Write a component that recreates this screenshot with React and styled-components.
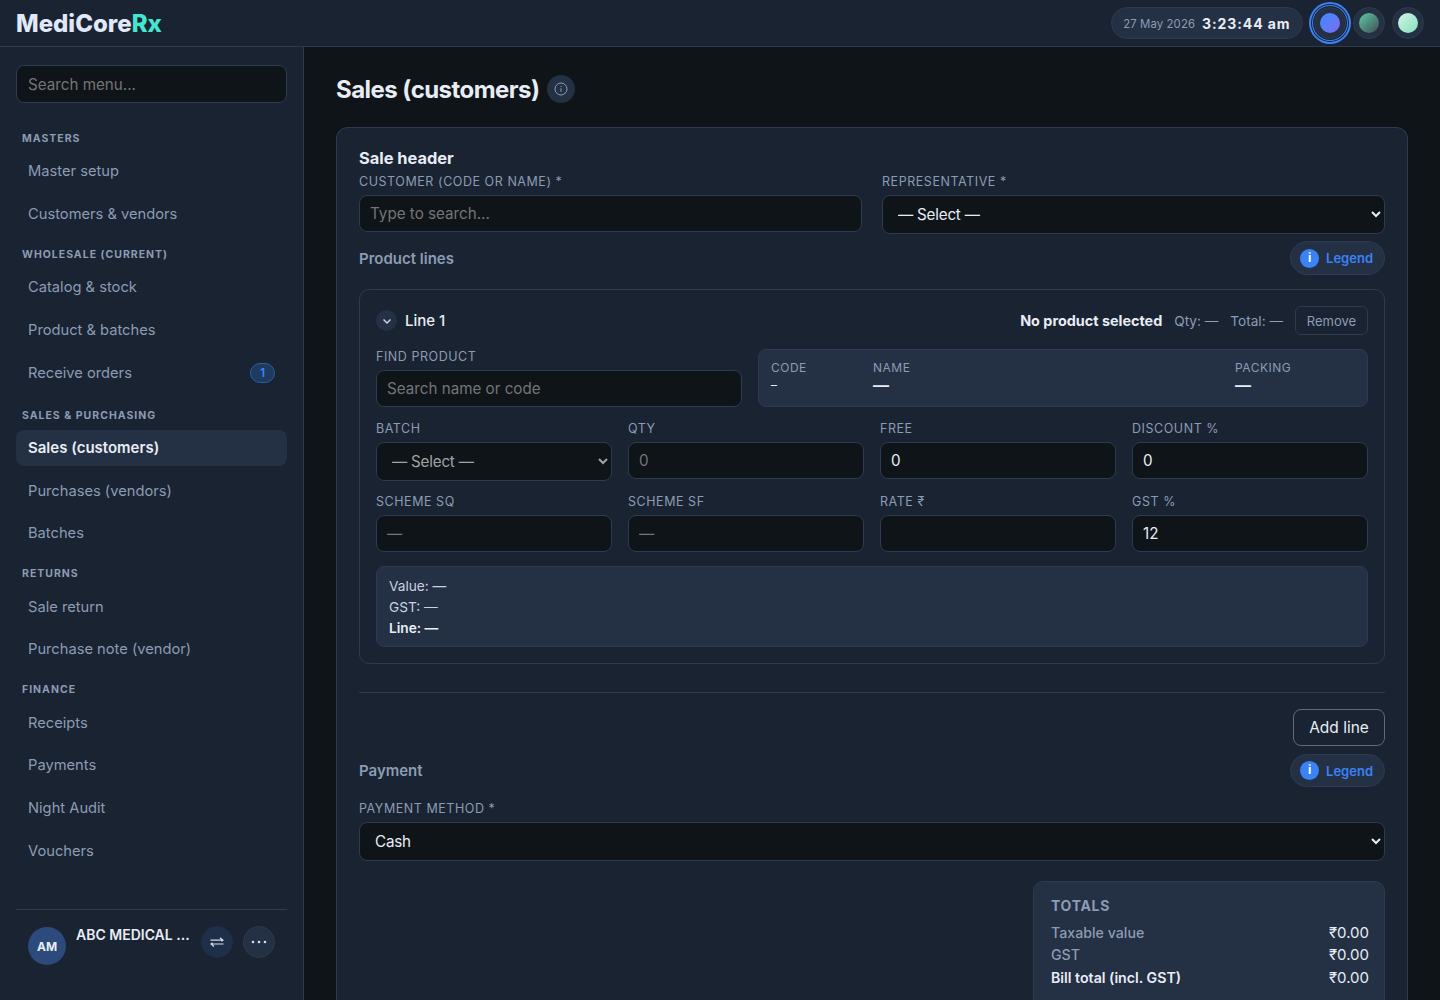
import React from 'react';
import styled, { createGlobalStyle } from 'styled-components';

const GlobalStyle = createGlobalStyle`
  * { box-sizing: border-box; }
  html, body { margin: 0; height: 100%; }
  body {
    background: #0f1419;
    color: #e8edf5;
    font-family: Inter, "Noto Sans", sans-serif;
    overflow: hidden;
  }
  input, select, button { font-family: inherit; }
`;

const Page = styled.div`
  display: flex;
  flex-direction: column;
  height: 1000px;
  overflow: hidden;
`;

const Header = styled.header`
  flex: none;
  display: flex;
  align-items: center;
  justify-content: space-between;
  height: 47px;
  padding: 0 16px;
  background: #1a2332;
  border-bottom: 1px solid #2d3a4f;
`;

const Logo = styled.div`
  font-size: 24px;
  font-weight: 800;
  color: #e0e8fa;
  span { color: #45e6d0; }
`;

const HeaderRight = styled.div`
  display: flex;
  align-items: center;
  margin-right: -3.5px;
`;

const Clock = styled.div`
  display: flex;
  align-items: center;
  gap: 7px;
  height: 32px;
  padding: 0 11px;
  margin-right: 8px;
  border-radius: 16px;
  background: #243044;
  border: 1px solid #2d3a4f;
`;

const ClockDate = styled.span`
  margin-top: 2px;
  font-size: 11.4px;
  color: #8b9cb3;
  letter-spacing: 0.1px;
`;

const ClockTime = styled.span`
  font-size: 14px;
  font-weight: 700;
  color: #e8edf5;
  letter-spacing: 0.9px;
`;

const ThemeDot = styled.button`
  display: flex;
  align-items: center;
  justify-content: center;
  width: 32px;
  height: 32px;
  padding: 0;
  margin: 0 3.5px;
  border-radius: 50%;
  background: #243044;
  border: 1px solid #2d3a4f;
  box-shadow: ${p => (p.$active ? '0 0 0 1px #1a2332, 0 0 0 2px #3b82f6, 0 0 0 3px #1a2332, 0 0 0 5px #3b82f6' : 'none')};
  i {
    display: block;
    width: 20px;
    height: 20px;
    border-radius: 50%;
    background: ${p => p.$fill};
  }
`;

const Body = styled.div`
  flex: 1;
  display: flex;
  min-height: 0;
`;

const Sidebar = styled.aside`
  flex: none;
  display: flex;
  flex-direction: column;
  width: 304px;
  padding: 18px 16px 0;
  background: #1a2332;
  border-right: 1px solid #2d3a4f;
`;

const Input = styled.input`
  display: block;
  width: 100%;
  height: ${p => p.$h || 37}px;
  padding: 0 ${p => p.$pad || 10}px;
  font-size: 15.2px;
  color: #e8edf5;
  background: #0f1419;
  border: 1px solid #2d3a4f;
  border-radius: 8px;
  outline: none;
  &::placeholder { color: #757575; opacity: 1; }
`;

const Select = styled.select`
  display: block;
  width: 100%;
  height: 39px;
  padding: 0 11px;
  font-size: 15.2px;
  letter-spacing: -0.2px;
  color: ${p => (p.$muted ? '#a3a3a3' : '#e8edf5')};
  background: #0f1419;
  border: 1px solid #2d3a4f;
  border-radius: 8px;
  outline: none;
`;

const SearchBox = styled.div`
  margin-bottom: 19px;
`;

const Nav = styled.nav`
  flex: 1;
`;

const NavLabel = styled.div`
  display: flex;
  align-items: center;
  height: 30.7px;
  padding: 2px 0 0 6px;
  font-size: 10.5px;
  font-weight: 700;
  letter-spacing: 1px;
  color: #8b9cb3;
  text-transform: uppercase;
`;

const NavItem = styled.div`
  display: flex;
  align-items: center;
  justify-content: space-between;
  height: ${p => (p.$tall ? 38.7 : 36.7)}px;
  margin-bottom: 6px;
  padding: 0 12px;
  border-radius: 8px;
  font-size: ${p => (p.$active ? 15 : 14.7)}px;
  font-weight: ${p => (p.$active ? 600 : 400)};
  color: ${p => (p.$active ? '#e8edf5' : '#8b9cb3')};
  background: ${p => (p.$active ? '#243044' : 'transparent')};
`;

const NavBadge = styled.span`
  width: 25px;
  height: 20px;
  border-radius: 10px;
  text-align: center;
  font-size: 12px;
  font-weight: 600;
  line-height: 18px;
  color: #3b82f6;
  background: #1e3a5f;
  border: 1px solid #2a5ca8;
`;

const SideFooter = styled.div`
  display: flex;
  align-items: flex-start;
  height: 91px;
  padding: 16px 12px 0;
  border-top: 1px solid #2d3a4f;
`;

const Avatar = styled.div`
  flex: none;
  display: flex;
  align-items: center;
  justify-content: center;
  width: 38px;
  height: 38px;
  margin-top: 1px;
  border-radius: 50%;
  background: #2c4a7c;
  color: #e8edf5;
  font-size: 12px;
  font-weight: 700;
`;

const CompanyName = styled.div`
  flex: 1;
  min-width: 0;
  margin: 0 10px;
  font-size: 14px;
  font-weight: 600;
  line-height: 17px;
  color: #e8edf5;
  white-space: nowrap;
`;

const RoundButton = styled.button`
  flex: none;
  display: flex;
  align-items: center;
  justify-content: center;
  width: 32px;
  height: 32px;
  padding: 0;
  margin-left: ${p => p.$gap || 0}px;
  border-radius: 50%;
  background: ${p => p.$bg || '#243044'};
  border: 1px solid ${p => p.$line || '#2d3a4f'};
  color: #d4dce8;
`;

const Main = styled.main`
  flex: 1;
  min-width: 0;
  padding: 28px 32px 0;
  overflow: hidden;
`;

const TitleRow = styled.div`
  display: flex;
  align-items: center;
  gap: 8px;
  height: 28px;
  margin-bottom: 24px;
`;

const Title = styled.h1`
  margin: 0;
  font-size: 24px;
  font-weight: 700;
  letter-spacing: -0.55px;
  color: #e8edf5;
`;

const InfoButton = styled.button`
  display: flex;
  align-items: center;
  justify-content: center;
  width: 28px;
  height: 28px;
  padding: 0;
  border: 0;
  border-radius: 50%;
  background: #243044;
  color: #8b9cb3;
`;

const Card = styled.section`
  padding: 21px 22px 0;
  background: #1a2332;
  border: 1px solid #2d3a4f;
  border-bottom: 0;
  border-radius: 12px 12px 0 0;
`;

const CardTitle = styled.h2`
  margin: 0;
  font-size: 16.4px;
  line-height: 18px;
  font-weight: 700;
  color: #e8edf5;
`;

const FieldLabel = styled.label`
  display: block;
  font-size: 12.5px;
  line-height: 14px;
  margin-bottom: 6px;
  letter-spacing: 0.55px;
  color: #8b9cb3;
  text-transform: uppercase;
`;

const HeaderGrid = styled.div`
  display: grid;
  grid-template-columns: 1fr 1fr;
  gap: 20px;
  margin-top: 8px;
  height: 60px;
`;

const SectionRow = styled.div`
  display: flex;
  align-items: center;
  justify-content: space-between;
  height: ${p => p.$h || 34}px;
  margin-top: ${p => p.$top || 0}px;
`;

const SectionTitle = styled.div`
  font-size: 15px;
  font-weight: 600;
  color: #8b9cb3;
`;

const Legend = styled.button`
  display: flex;
  align-items: center;
  gap: 7px;
  height: 100%;
  padding: 0 11px 0 9px;
  border-radius: 17px;
  background: #243044;
  border: 1px solid #2d3a4f;
  color: #3b82f6;
  font-size: 13px;
  font-weight: 600;
`;

const LegendIcon = styled.span`
  width: 19px;
  height: 19px;
  border-radius: 50%;
  background: #3b82f6;
  color: #fff;
  font-size: 12px;
  font-weight: 700;
  line-height: 18px;
  text-align: center;
`;

const LineCard = styled.div`
  margin-top: 14px;
  padding: 16px;
  height: 375px;
  border: 1px solid #2d3a4f;
  border-radius: 10px;
`;

const LineHeader = styled.div`
  display: flex;
  align-items: center;
  height: 29px;
  margin-bottom: 14px;
`;

const Chevron = styled.span`
  display: flex;
  align-items: center;
  justify-content: center;
  width: 21px;
  height: 21px;
  margin-right: 8px;
  border-radius: 50%;
  background: #243044;
  color: #c8d2e0;
`;

const LineName = styled.span`
  flex: 1;
  font-size: 15px;
  font-weight: 500;
`;

const LineProduct = styled.span`
  font-size: 14.4px;
  font-weight: 700;
  margin-right: 12px;
`;

const LineStat = styled.span`
  font-size: 13.6px;
  color: #8b9cb3;
  margin-right: 12px;
`;

const RemoveButton = styled.button`
  width: 73px;
  height: 29px;
  padding: 0;
  font-size: 13px;
  color: #8b9cb3;
  background: transparent;
  border: 1px solid #2d3a4f;
  border-radius: 6px;
`;

const FindGrid = styled.div`
  display: grid;
  grid-template-columns: 3fr 5fr;
  gap: 16px;
  align-items: end;
  margin-bottom: 15px;
`;

const ProductInfo = styled.div`
  display: grid;
  grid-template-columns: 90px 1fr 120px;
  column-gap: 12px;
  height: 58px;
  padding: 11px 12px 0;
  background: #243044;
  border: 1px solid #2d3a4f;
  border-radius: 8px;
`;

const InfoLabel = styled.div`
  font-size: 12px;
  line-height: 14px;
  letter-spacing: 0.5px;
  color: #8b9cb3;
  text-transform: uppercase;
`;

const InfoValue = styled.div`
  font-size: ${p => (p.$small ? 12 : 16)}px;
  font-weight: ${p => (p.$small ? 400 : 600)};
  line-height: 20px;
  color: #e8edf5;
`;

const FourGrid = styled.div`
  display: grid;
  grid-template-columns: repeat(4, 1fr);
  column-gap: 16px;
  height: ${p => p.$h}px;
`;

const SummaryBox = styled.div`
  padding: 9px 12px;
  height: 81px;
  background: #243044;
  border: 1px solid #2d3a4f;
  border-radius: 8px;
  font-size: 13.7px;
  line-height: 21px;
  color: #c8d2e0;
  b { font-weight: 600; color: #e8edf5; }
`;

const Divider = styled.hr`
  margin: 28px 0 16px;
  border: 0;
  border-top: 1px solid #2d3a4f;
`;

const ActionsRow = styled.div`
  display: flex;
  justify-content: flex-end;
  margin-bottom: 8px;
`;

const AddButton = styled.button`
  width: 92px;
  height: 37px;
  padding: 0;
  font-size: 15.5px;
  color: #e8edf5;
  background: transparent;
  border: 1px solid #5a6a80;
  border-radius: 8px;
`;

const PaymentField = styled.div`
  margin-top: 15px;
`;

const TotalsRow = styled.div`
  display: flex;
  justify-content: flex-end;
  margin-top: 20px;
`;

const Totals = styled.div`
  width: 352px;
  height: 130px;
  padding: 15px 15px 0 17px;
  background: #243044;
  border: 1px solid #2d3a4f;
  border-radius: 10px;
`;

const TotalsTitle = styled.div`
  font-size: 14px;
  font-weight: 700;
  letter-spacing: 0.7px;
  line-height: 17px;
  margin-bottom: 7.5px;
  color: #8b9cb3;
`;

const TotalLine = styled.div`
  display: flex;
  justify-content: space-between;
  font-size: 14.2px;
  line-height: 22.5px;
  font-weight: ${p => (p.$strong ? 600 : 500)};
  color: ${p => (p.$strong ? '#e8edf5' : '#8b9cb3')};
  span:last-child { color: #e8edf5; font-weight: 400; font-size: 15px; }
`;

const navGroups = [
  { label: 'Masters', items: ['Master setup', 'Customers & vendors'] },
  { label: 'Wholesale (current)', items: ['Catalog & stock', 'Product & batches', 'Receive orders'] },
  { label: 'Sales & purchasing', items: ['Sales (customers)', 'Purchases (vendors)', 'Batches'] },
  { label: 'Returns', items: ['Sale return', 'Purchase note (vendor)'] },
  { label: 'Finance', items: ['Receipts', 'Payments', 'Night Audit', 'Vouchers'] },
];

const LegendButton = () => (
  <Legend>
    <LegendIcon>i</LegendIcon>
    Legend
  </Legend>
);

const Field = ({ label, children }) => (
  <div>
    <FieldLabel>{label}</FieldLabel>
    {children}
  </div>
);

export default function App() {
  return (
    <Page>
      <GlobalStyle />
      <Header>
        <Logo>MediCore<span>Rx</span></Logo>
        <HeaderRight>
          <Clock>
            <ClockDate>27 May 2026</ClockDate>
            <ClockTime>3:23:44 am</ClockTime>
          </Clock>
          <ThemeDot $active $fill="linear-gradient(135deg, #3f8cff, #7c6cf0)"><i /></ThemeDot>
          <ThemeDot $fill="linear-gradient(135deg, #5fc9a4, #3f4f55)"><i /></ThemeDot>
          <ThemeDot $fill="linear-gradient(135deg, #d2f5e6, #84e0bd)"><i /></ThemeDot>
        </HeaderRight>
      </Header>
      <Body>
        <Sidebar>
          <SearchBox>
            <Input $h={38} $pad={11} placeholder="Search menu..." />
          </SearchBox>
          <Nav>
            {navGroups.map(group => (
              <div key={group.label}>
                <NavLabel>{group.label}</NavLabel>
                {group.items.map(item => (
                  <NavItem key={item} $active={item === 'Sales (customers)'} $tall={item === 'Receive orders'}>
                    {item}
                    {item === 'Receive orders' && <NavBadge>1</NavBadge>}
                  </NavItem>
                ))}
              </div>
            ))}
          </Nav>
          <SideFooter>
            <Avatar>AM</Avatar>
            <CompanyName>ABC MEDICAL ...</CompanyName>
            <RoundButton $bg="#1e2f4a" $line="#1e2f4a">
              <svg width="14" height="10" viewBox="0 0 14 10" fill="none" stroke="currentColor" strokeWidth="1.2">
                <path d="M0.5 3.2H13M10 0.7l3 2.5-1.5 1.2" />
                <path d="M13.5 7H1M4 9.5L1 7l1.5-1.2" />
              </svg>
            </RoundButton>
            <RoundButton $gap={10}>
              <svg width="16" height="4" viewBox="0 0 16 4" fill="currentColor">
                <circle cx="2" cy="2" r="1.3" />
                <circle cx="8" cy="2" r="1.3" />
                <circle cx="14" cy="2" r="1.3" />
              </svg>
            </RoundButton>
          </SideFooter>
        </Sidebar>
        <Main>
          <TitleRow>
            <Title>Sales (customers)</Title>
            <InfoButton>
              <svg width="14" height="14" viewBox="0 0 14 14" fill="none" stroke="currentColor" strokeWidth="1">
                <circle cx="7" cy="7" r="6" />
                <path d="M7 6.2v3.6M7 4v1" />
              </svg>
            </InfoButton>
          </TitleRow>
          <Card>
            <CardTitle>Sale header</CardTitle>
            <HeaderGrid>
              <Field label="Customer (code or name) *">
                <Input placeholder="Type to search..." />
              </Field>
              <Field label="Representative *">
                <Select><option>— Select —</option></Select>
              </Field>
            </HeaderGrid>
            <SectionRow $top={6}>
              <SectionTitle>Product lines</SectionTitle>
              <LegendButton />
            </SectionRow>
            <LineCard>
              <LineHeader>
                <Chevron>
                  <svg width="12" height="12" viewBox="0 0 12 12" fill="none" stroke="currentColor" strokeWidth="1.5">
                    <path d="M2.5 4.5L6 8l3.5-3.5" />
                  </svg>
                </Chevron>
                <LineName>Line 1</LineName>
                <LineProduct>No product selected</LineProduct>
                <LineStat>Qty: —</LineStat>
                <LineStat>Total: —</LineStat>
                <RemoveButton>Remove</RemoveButton>
              </LineHeader>
              <FindGrid>
                <Field label="Find product">
                  <Input placeholder="Search name or code" />
                </Field>
                <ProductInfo>
                  <div>
                    <InfoLabel>Code</InfoLabel>
                    <InfoValue $small>–</InfoValue>
                  </div>
                  <div>
                    <InfoLabel>Name</InfoLabel>
                    <InfoValue>—</InfoValue>
                  </div>
                  <div>
                    <InfoLabel>Packing</InfoLabel>
                    <InfoValue>—</InfoValue>
                  </div>
                </ProductInfo>
              </FindGrid>
              <FourGrid $h={73}>
                <Field label="Batch">
                  <Select $muted><option>— Select —</option></Select>
                </Field>
                <Field label="Qty">
                  <Input placeholder="0" />
                </Field>
                <Field label="Free">
                  <Input defaultValue="0" />
                </Field>
                <Field label="Discount %">
                  <Input defaultValue="0" />
                </Field>
              </FourGrid>
              <FourGrid $h={71}>
                <Field label="Scheme SQ">
                  <Input placeholder="—" />
                </Field>
                <Field label="Scheme SF">
                  <Input placeholder="—" />
                </Field>
                <Field label="Rate ₹">
                  <Input />
                </Field>
                <Field label="GST %">
                  <Input defaultValue="12" />
                </Field>
              </FourGrid>
              <SummaryBox>
                <div>Value: —</div>
                <div>GST: —</div>
                <div><b>Line: —</b></div>
              </SummaryBox>
            </LineCard>
            <Divider />
            <ActionsRow>
              <AddButton>Add line</AddButton>
            </ActionsRow>
            <SectionRow $h={33}>
              <SectionTitle>Payment</SectionTitle>
              <LegendButton />
            </SectionRow>
            <PaymentField>
              <FieldLabel>Payment method *</FieldLabel>
              <Select><option>Cash</option></Select>
            </PaymentField>
            <TotalsRow>
              <Totals>
                <TotalsTitle>TOTALS</TotalsTitle>
                <TotalLine><span>Taxable value</span><span>₹0.00</span></TotalLine>
                <TotalLine><span>GST</span><span>₹0.00</span></TotalLine>
                <TotalLine $strong><span>Bill total (incl. GST)</span><span>₹0.00</span></TotalLine>
              </Totals>
            </TotalsRow>
          </Card>
        </Main>
      </Body>
    </Page>
  );
}
